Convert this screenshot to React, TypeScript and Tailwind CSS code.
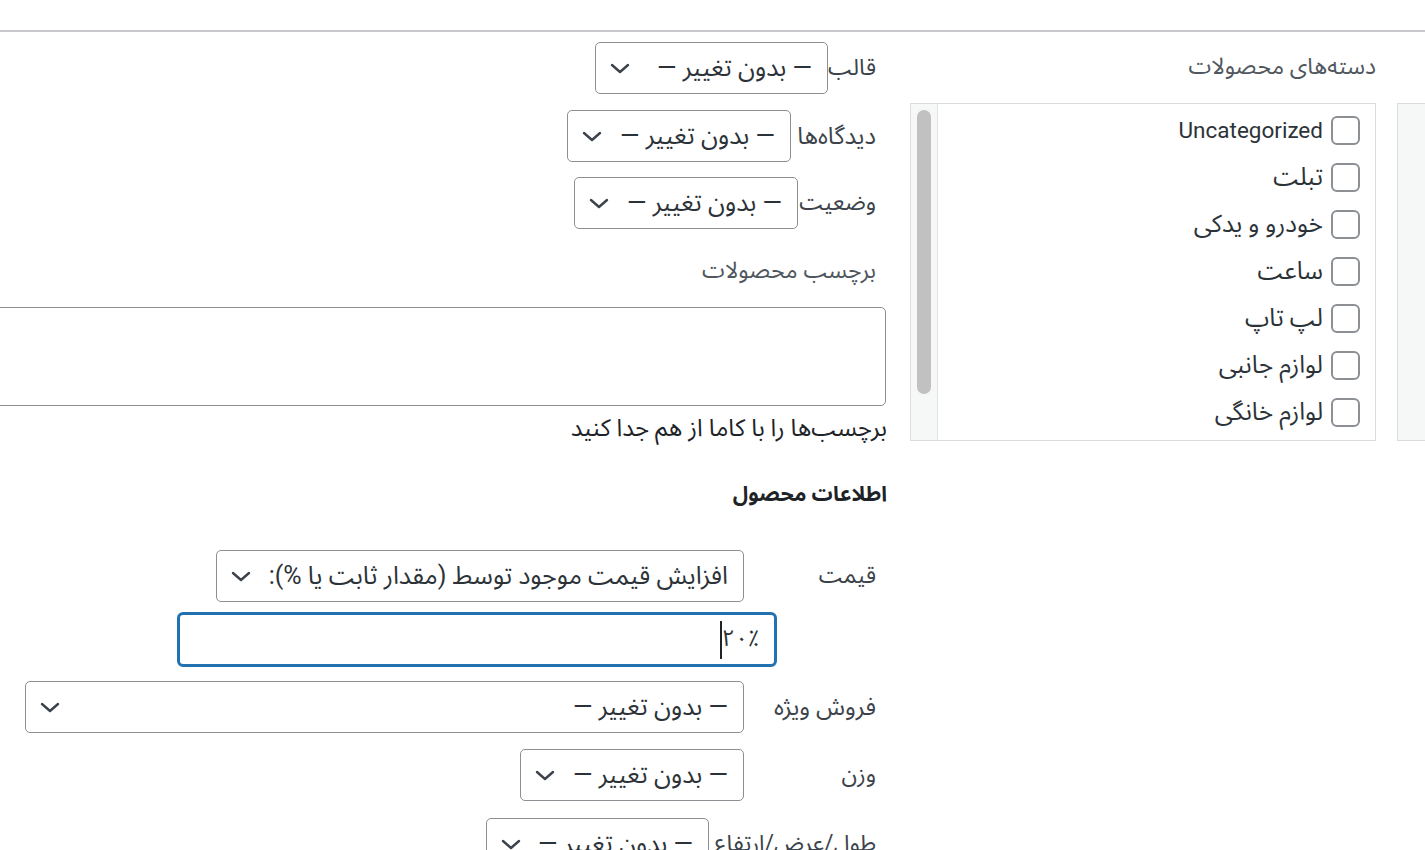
import React from "react";

const FONT = {
  fontFamily: 'Roboto, "Noto Sans Arabic", "Vazirmatn", "DejaVu Sans", sans-serif',
};

function Chevron() {
  return (
    <svg width="20" height="11" viewBox="0 0 20 11" className="shrink-0">
      <polyline
        points="2,2 10,9 18,2"
        fill="none"
        stroke="#3c434a"
        strokeWidth="2.4"
        strokeLinecap="round"
        strokeLinejoin="round"
      />
    </svg>
  );
}

function Select({ w, text }: { w: string; text: string }) {
  return (
    <div
      className={`${w} h-[52px] shrink-0 flex items-center justify-between rounded-[5px] border border-[#8c8f94] bg-white pr-[15px] pl-[14px] text-[25px] text-[#2c3338]`}
    >
      <span className="whitespace-nowrap">{text}</span>
      <Chevron />
    </div>
  );
}

const NC = "— بدون تغییر —";

const cats = [
  "Uncategorized",
  "تبلت",
  "خودرو و یدکی",
  "ساعت",
  "لپ تاپ",
  "لوازم جانبی",
  "لوازم خانگی",
];

export default function App() {
  return (
    <div dir="rtl" style={FONT} className="w-[1425px] h-[850px] overflow-hidden bg-white">
      <div className="h-[32px] border-b-2 border-[#c8c9cc]" />
      <div className="flex items-start">
        {/* partially visible box on far right */}
        <div className="w-[28px] shrink-0 mt-[71px] h-[338px] bg-[#f6f7f7] border-y border-l border-[#dcdcde]" />

        {/* categories column */}
        <div className="w-[466px] shrink-0 mr-[21px] ml-[23px]">
          <div className="mt-[20px] h-[30px] leading-[30px] text-[23px] text-[#50575e] whitespace-nowrap">
            دسته‌های محصولات
          </div>
          <div className="mt-[21px] h-[338px] flex border border-[#dcdcde] bg-white">
            <div className="flex-1 pr-[15px] pt-[3px]">
              {cats.map((c, i) => (
                <div key={c} className="h-[47px] flex items-center">
                  <div className="w-[29px] h-[29px] shrink-0 rounded-[6px] border-2 border-[#8c8f94] bg-white" />
                  <span
                    className={`mr-[8px] text-[#2c3338] whitespace-nowrap ${
                      i === 0 ? "text-[22.5px]" : "text-[24.5px]"
                    }`}
                  >
                    {c}
                  </span>
                </div>
              ))}
            </div>
            <div className="w-[27px] shrink-0 bg-[#f6f7f7] border-r border-[#e2e4e7] pt-[6px] flex justify-center">
              <div className="w-[14px] h-[284px] rounded-full bg-[#c1c1c1]" />
            </div>
          </div>
        </div>

        {/* main column */}
        <div className="flex-1 min-w-0">
          <div className="mt-[10px] pr-[11px] flex items-center h-[52px]">
            <span className="w-[48px] shrink-0 text-[23px] text-[#3c434a] whitespace-nowrap">قالب</span>
            <Select w="w-[233px]" text={NC} />
          </div>
          <div className="mt-[16px] pr-[11px] flex items-center h-[52px]">
            <span className="w-[85px] shrink-0 text-[24px] text-[#3c434a] whitespace-nowrap">دیدگاه‌ها</span>
            <Select w="w-[224px]" text={NC} />
          </div>
          <div className="mt-[15px] pr-[11px] flex items-center h-[52px]">
            <span className="w-[78px] shrink-0 text-[23px] text-[#3c434a] whitespace-nowrap">وضعیت</span>
            <Select w="w-[224px]" text={NC} />
          </div>
          <div className="mt-[27px] pr-[11px] h-[30px] leading-[30px] text-[23px] text-[#50575e] whitespace-nowrap">
            برچسب محصولات
          </div>
          <div className="mt-[21px] mr-[1px] w-[920px] h-[99px] rounded-[5px] border border-[#8c8f94] bg-white" />
          <div className="mt-[7px] h-[30px] leading-[30px] text-[24px] text-[#1d2327] whitespace-nowrap">
            برچسب‌ها را با کاما از هم جدا کنید
          </div>
          <div className="mt-[36px] h-[30px] leading-[30px] text-[21px] font-bold text-[#1d2327] whitespace-nowrap">
            اطلاعات محصول
          </div>

          <div className="mt-[41px] pr-[11px] flex items-center h-[52px]">
            <span className="w-[132px] shrink-0 text-[23px] text-[#3c434a]">قیمت</span>
            <Select w="w-[528px]" text="افزایش قیمت موجود توسط (مقدار ثابت یا %):" />
          </div>
          <div className="mt-[10px] mr-[110px] w-[600px] h-[55px] rounded-[6px] border-[3px] border-[#2271b1] flex items-center pr-[15px] text-[23px] text-[#2c3338]">
            <span>۲۰٪</span>
            <span className="w-[2px] h-[38px] bg-[#1d2327]" />
          </div>
          <div className="mt-[14px] pr-[11px] flex items-center h-[52px]">
            <span className="w-[132px] shrink-0 text-[24px] text-[#3c434a] whitespace-nowrap">فروش ویژه</span>
            <Select w="w-[719px]" text={NC} />
          </div>
          <div className="mt-[16px] pr-[11px] flex items-center h-[52px]">
            <span className="w-[132px] shrink-0 text-[23px] text-[#3c434a]">وزن</span>
            <Select w="w-[224px]" text={NC} />
          </div>
          <div className="mt-[17px] pr-[11px] flex items-center h-[52px]">
            <span className="w-[167px] shrink-0 text-[23px] text-[#3c434a] whitespace-nowrap">طول/عرض/ارتفاع</span>
            <Select w="w-[223px]" text={NC} />
          </div>
        </div>
      </div>
    </div>
  );
}
